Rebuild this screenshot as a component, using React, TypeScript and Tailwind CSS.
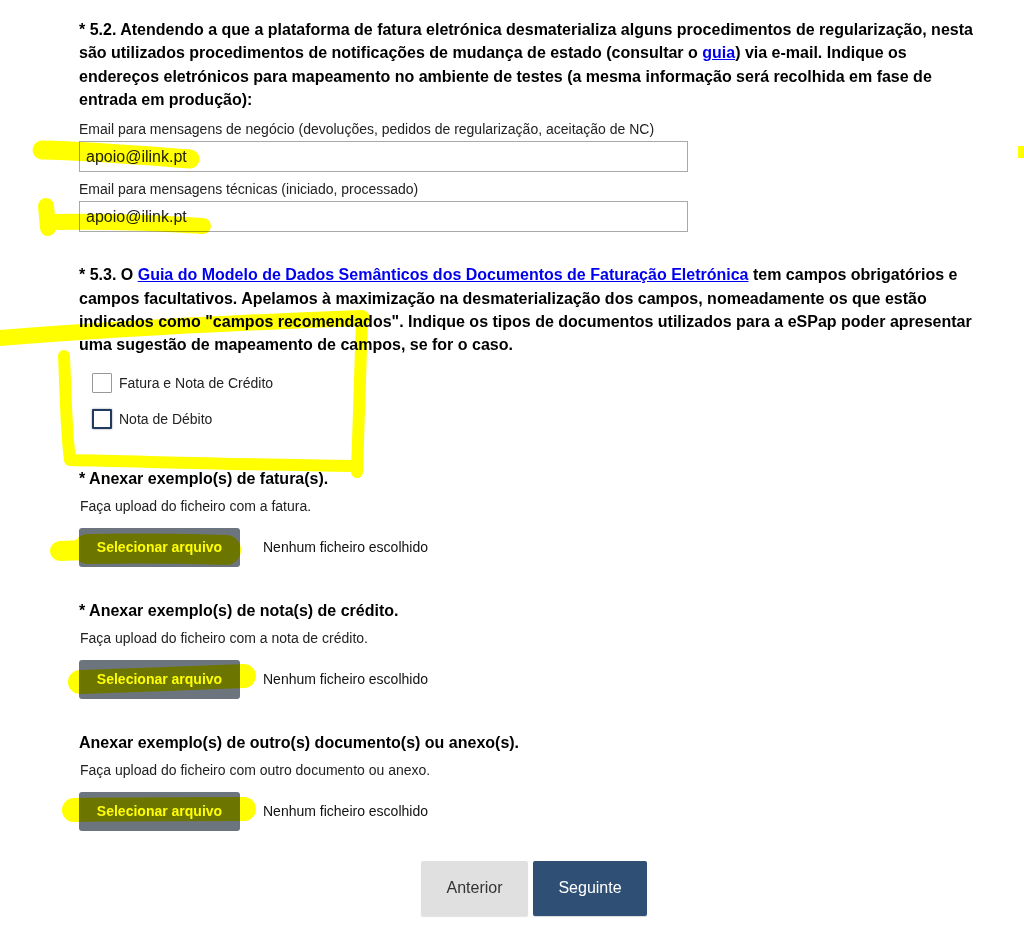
import React from 'react';

const font = { fontFamily: '"Liberation Sans", Arial, sans-serif' };

function Upload({ title, required, hint }: { title: string; required?: boolean; hint: string }) {
    return (
        <div className="flex flex-col">
            <p className="text-[16px] leading-[23px] font-bold text-black">
                {required && <span>* </span>}
                {title}
            </p>
            <p className="mt-[7px] pl-[1px] text-[14px] leading-[18px] text-[#222]">{hint}</p>
            <div className="mt-[13px] flex flex-row items-center">
                <button className="h-[39px] w-[161px] rounded-[3px] bg-[#6c757d] text-[14px] font-bold text-white">
                    Selecionar arquivo
                </button>
                <span className="ml-[23px] text-[14px] text-[#111]">Nenhum ficheiro escolhido</span>
            </div>
        </div>
    );
}

// highlighter marks drawn over the page
function Highlights() {
    return (
        <svg
            className="absolute inset-0 pointer-events-none mix-blend-multiply"
            width="1024"
            height="931"
            viewBox="0 0 1024 931"
        >
            <g fill="none" stroke="#ffff00" strokeLinecap="round" strokeLinejoin="round">
                <path d="M42 150 C 90 151 150 156 190 159" strokeWidth="19" />
                <path d="M46 206 L 48 228 M 50 222 C 110 221 160 223 203 226" strokeWidth="16" />
                <path d="M0 338 C 100 330 250 322 362 318" strokeWidth="16" />
                <path d="M362 318 L 357 472 M 64 356 C 66 400 66 430 70 460 C 160 462 260 465 354 466" strokeWidth="12" />
                <path d="M60 551 L 84 550" strokeWidth="20" />
                <path d="M88 549 C 140 548 190 549 226 550" strokeWidth="30" />
                <path d="M80 682 C 130 680 200 678 244 676" strokeWidth="24" />
                <path d="M74 810 C 130 809 200 809 244 809" strokeWidth="24" />
                <path d="M1021 146 L 1021 158" strokeWidth="6" strokeLinecap="butt" />
            </g>
        </svg>
    );
}

export default function App() {
    return (
        <div className="relative w-[1024px] h-[931px] bg-white overflow-hidden" style={font}>
            <div className="flex flex-col pl-[79px] pt-[18px] w-[984px]">
                <p className="text-[16px] leading-[23.33px] font-bold text-black">
                    * 5.2. Atendendo a que a plataforma de fatura eletrónica desmaterializa alguns procedimentos de regularização, nesta são utilizados procedimentos de notificações de mudança de estado (consultar o{' '}
                    <a className="text-[#0000ee] underline">guia</a>) via e-mail. Indique os endereços eletrónicos para mapeamento no ambiente de testes (a mesma informação será recolhida em fase de entrada em produção):
                </p>

                <label className="mt-[9px] text-[14px] leading-[18px] text-[#222]">
                    Email para mensagens de negócio (devoluções, pedidos de regularização, aceitação de NC)
                </label>
                <div className="mt-[3px] w-[609px] h-[31px] border border-[#a9a9a9] flex items-center px-[6px] text-[16px] text-[#222]">
                    apoio@ilink.pt
                </div>

                <label className="mt-[8px] text-[14px] leading-[18px] text-[#222]">
                    Email para mensagens técnicas (iniciado, processado)
                </label>
                <div className="mt-[3px] w-[609px] h-[31px] border border-[#a9a9a9] flex items-center px-[6px] text-[16px] text-[#222]">
                    apoio@ilink.pt
                </div>

                <p className="mt-[31px] text-[16px] leading-[23.33px] font-bold text-black">
                    * 5.3. O{' '}
                    <a className="text-[#0000ee] underline">Guia do Modelo de Dados Semânticos dos Documentos de Faturação Eletrónica</a>{' '}
                    tem campos obrigatórios e campos facultativos. Apelamos à maximização na desmaterialização dos campos, nomeadamente os que estão indicados como "campos recomendados". Indique os tipos de documentos utilizados para a eSPap poder apresentar uma sugestão de mapeamento de campos, se for o caso.
                </p>

                <div className="mt-[16px] flex flex-col gap-[15px] pl-[13px]">
                    <div className="flex flex-row items-center">
                        <span className="w-[20px] h-[20px] border border-[#999] rounded-[1px]" />
                        <span className="ml-[7px] text-[14px] text-[#222]">Fatura e Nota de Crédito</span>
                    </div>
                    <div className="flex flex-row items-center">
                        <span className="w-[20px] h-[20px] border-[2px] border-[#1f3a5c] rounded-[1px] shadow-[0_0_2px_rgba(31,58,92,0.6)]" />
                        <span className="ml-[7px] text-[14px] text-[#222]">Nota de Débito</span>
                    </div>
                </div>

                <div className="mt-[37px] flex flex-col gap-[32px]">
                    <Upload required title="Anexar exemplo(s) de fatura(s)." hint="Faça upload do ficheiro com a fatura." />
                    <Upload required title="Anexar exemplo(s) de nota(s) de crédito." hint="Faça upload do ficheiro com a nota de crédito." />
                    <Upload title="Anexar exemplo(s) de outro(s) documento(s) ou anexo(s)." hint="Faça upload do ficheiro com outro documento ou anexo." />
                </div>
            </div>

            <div className="mt-[30px] flex flex-row justify-center gap-[5px] pl-[44px] w-[1024px]">
                <button className="h-[55px] w-[107px] rounded-[2px] bg-[#e0e0e0] text-[16px] text-[#333] shadow-[0_1px_1px_rgba(0,0,0,0.12)]">
                    Anterior
                </button>
                <button className="h-[55px] w-[114px] rounded-[2px] bg-[#2f5074] text-[16px] text-white shadow-[0_1px_1px_rgba(0,0,0,0.15)]">
                    Seguinte
                </button>
            </div>

            <Highlights />
        </div>
    );
}
